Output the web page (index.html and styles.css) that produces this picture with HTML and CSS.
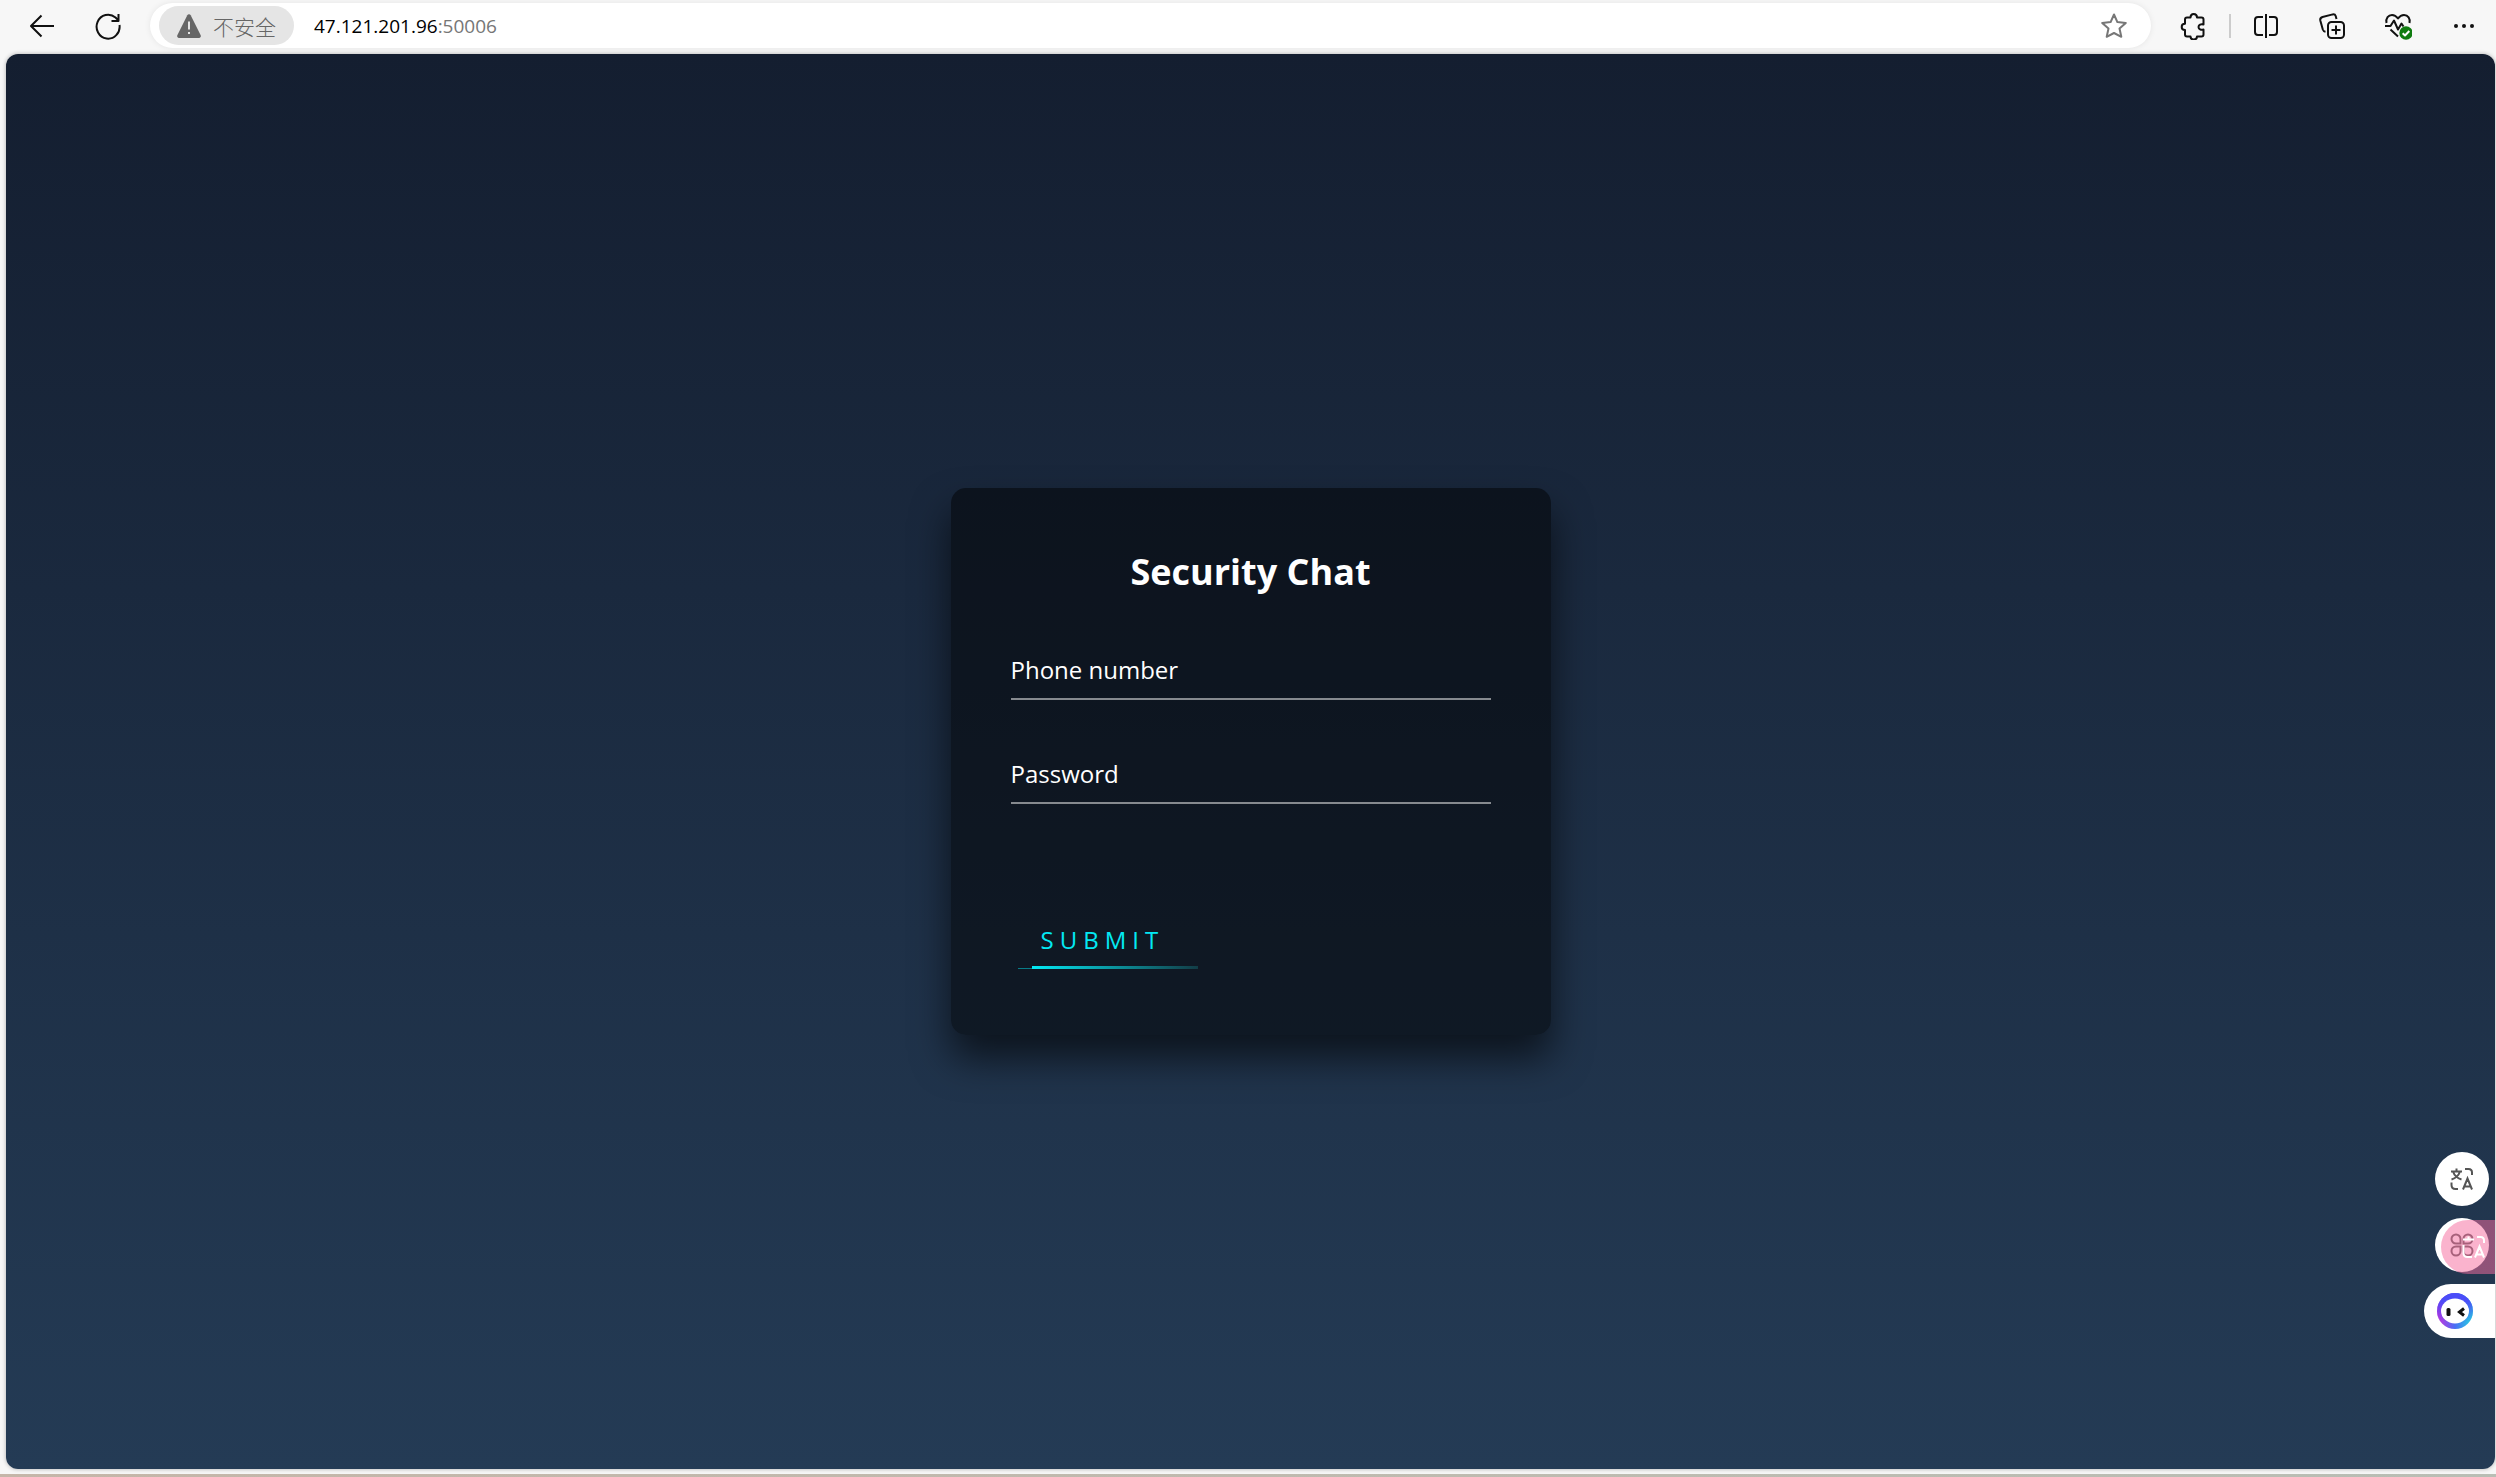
FILE: index.html
```html
<!DOCTYPE html>
<html lang="en">
<head>
<meta charset="utf-8">
<title>Security Chat</title>
<link rel="stylesheet" href="styles.css">
</head>
<body>
<header class="toolbar">
  <button class="tool" type="button" aria-label="Back">
    <svg class="icon" viewBox="0 0 28 28"><path d="M26 14H3M13.500 3.500L3 14l10.500 10.500"/></svg>
  </button>
  <button class="tool" type="button" aria-label="Refresh">
    <svg class="icon" viewBox="0 0 28 28"><path d="M25.500 13a11.500 12 0 1 1-4-7.500L24.500 8.500M24.500 2v7h-7"/></svg>
  </button>
  <div class="address">
    <button class="chip" type="button">
      <svg class="warn" viewBox="0 0 24 24"><path d="M10.300 1.200a2 2 0 0 1 3.400 0l10 20a2 2 0 0 1-1.700 2.800H2a2 2 0 0 1-1.700-2.800z" fill="#666"/><path d="M12 7.500v8M12 18v2" stroke="#e5e5e5" stroke-width="2"/></svg>
      <span>不安全</span>
    </button>
    <div class="url">47.121.201.96<span class="port">:50006</span></div>
    <button class="tool star" type="button" aria-label="Favorite">
      <svg class="icon" viewBox="0 0 28 28"><path d="M14 2.500l3.400 7.600 8.400.9-6.300 5.500 1.800 8.300L14 21l-7.300 3.800 1.800-8.300L2.200 11l8.400-.9z"/></svg>
    </button>
  </div>
  <nav class="tools">
    <button class="tool" type="button" aria-label="Extensions">
      <svg class="icon" viewBox="0 0 28 28"><path d="M7 5.500h3.500C10.500 3 12 2 13.700 2S17 3 17 5.500h4.500q2 0 2 2v5c-2.500-1-5 .3-5 2.500s2.500 3.300 5 2.500v5q0 2-2 2H17c0 2-1.500 3-3.300 3s-3.200-1-3.200-3H7q-2 0-2-2v-4.500c-2.300 0-3.300-1.300-3.300-3s1-3.200 3.300-3.200V7.500q0-2 2-2z"/></svg>
    </button>
    <span class="rule"></span>
    <button class="tool" type="button" aria-label="Split screen">
      <svg class="icon" viewBox="0 0 28 28"><path d="M11 5H6Q3 5 3 8v12q0 3 3 3h5M17 5h5q3 0 3 3v12q0 3-3 3h-5M14 2v24"/></svg>
    </button>
    <button class="tool" type="button" aria-label="Collections">
      <svg class="icon" viewBox="0 0 28 28"><rect x="10" y="10" width="16" height="16" rx="3.500"/><path d="M18 13.500v9M13.500 18h9M18.500 7l-.8-3q-.7-2-3-1.600L4.500 5Q1.700 6 2.300 8.500l2.500 9q.7 2 2.700 2.300"/></svg>
    </button>
    <button class="tool" type="button" aria-label="Browser essentials">
      <svg class="icon" viewBox="0 0 28 28"><path d="M2.500 11C1.500 6 4.500 3 8 3c3 0 4.500 1.500 6 3.500C15.500 4.500 17 3 20 3c4 0 6.500 3.500 5.500 8M1 14h5.500L10 8.500l4 9 3.500-6 2 3M6.500 17.500l7.500 7"/><circle cx="22" cy="21" r="6.700" fill="#107c10" stroke="none"/><path d="M18.700 21.200l2.300 2.300 4.300-4.500" stroke="#fff"/></svg>
    </button>
    <button class="tool" type="button" aria-label="More">
      <svg class="icon dots" viewBox="0 0 28 28"><circle cx="6" cy="14" r="2"/><circle cx="14" cy="14" r="2"/><circle cx="22" cy="14" r="2"/></svg>
    </button>
  </nav>
</header>
<main class="page">
  <form class="login">
    <h1 class="title">Security Chat</h1>
    <div class="field">
      <input id="phone" type="text">
      <label for="phone">Phone number</label>
    </div>
    <div class="field">
      <input id="password" type="password">
      <label for="password">Password</label>
    </div>
    <button class="submit" type="button">SUBMIT</button>
  </form>
</main>
<footer class="edge"></footer>
<aside class="dock">
  <button class="bubble" type="button" aria-label="Translate">
    <svg class="glyph" viewBox="0 0 24 24"><path d="M1 4.500h11M6.500 1.500v3M3 4.500q2 6 8.500 8M10 4.500q-2 6-8.500 8M15 2h3.500q3.500 0 3.500 3.500V8M1.500 15.500v2.500q0 4 4 4H8M13 22.500l4.500-11 4.500 11M14.500 19.500h6"/></svg>
  </button>
  <div class="stack">
    <button class="bubble" type="button" aria-label="Apps">
      <svg class="glyph" viewBox="0 0 24 24"><path d="M10.500 10.500H6A4.500 4.500 0 1 1 10.500 6zM13.500 10.500V6A4.500 4.500 0 1 1 18 10.500zM10.500 13.500V18A4.500 4.500 0 1 1 6 13.500zM13.500 13.500H18A4.500 4.500 0 1 1 13.500 18z"/></svg>
    </button>
    <button class="pink" type="button" aria-label="Translate page">
      <svg class="glyph" viewBox="0 0 24 24"><path d="M1 4.500h11M6.500 1.500v3M15 2h3.500q3.500 0 3.500 3.500V8M1.500 10v8q0 4 4 4H10M13 22.500l4.500-11 4.500 11M14.500 19.500h6"/></svg>
    </button>
  </div>
  <button class="assistant" type="button" aria-label="Assistant">
    <svg class="face" viewBox="0 0 36 36">
      <defs><linearGradient id="ring" x1="0" y1="1" x2="1" y2="1"><stop offset="0" stop-color="#c832dc"/><stop offset=".5" stop-color="#4a6ef5"/><stop offset="1" stop-color="#22d8df"/></linearGradient><linearGradient id="top" x1="0" y1="0" x2="0" y2="1"><stop offset=".2" stop-color="#4b4df8"/><stop offset=".8" stop-color="#4b3df5" stop-opacity="0"/></linearGradient></defs>
      <circle cx="18" cy="18" r="18" fill="url(#ring)"/><circle cx="18" cy="18" r="18" fill="url(#top)"/><ellipse cx="18" cy="18" rx="14" ry="12.500" fill="#fff"/>
      <rect x="9.500" y="15" width="4" height="8" rx="1.500" fill="#111"/><path d="M27 15.500L22.500 19l4.500 3.500" fill="none" stroke="#111" stroke-width="3"/>
    </svg>
  </button>
</aside>
</body>
</html>
```
FILE: styles.css
```css
* { box-sizing: border-box; }

body {
  margin: 0;
  min-height: 100vh;
  display: flex;
  flex-direction: column;
  background: #f7f7f7;
  font-family: "Open Sans", "Noto Sans CJK SC", sans-serif;
}

button {
  border: 0;
  padding: 0;
  background: none;
  font: inherit;
  color: inherit;
}

.toolbar {
  height: 54px;
  padding: 3px 16px 6px 26px;
  display: flex;
  align-items: center;
}

.tool {
  width: 32px;
  height: 32px;
  margin-right: 34px;
  display: grid;
  place-items: center;
}

.icon {
  width: 28px;
  height: 28px;
  fill: none;
  stroke: #111;
  stroke-width: 2;
  stroke-linejoin: round;
}

.dots { fill: #111; stroke: none; }

.address {
  flex: 1;
  height: 45px;
  margin: 0 27px 0 -8px;
  padding: 3px 21px 3px 9px;
  display: flex;
  align-items: center;
  background: #fff;
  border-radius: 23px;
  box-shadow: 0 0 6px rgba(0, 0, 0, 0.08);
}

.chip {
  height: 39px;
  padding: 0 18px;
  display: flex;
  align-items: center;
  gap: 12px;
  border-radius: 20px;
  background: #e5e5e5;
  color: #666;
  font-size: 21px;
  font-weight: 300;
}

.warn { width: 24px; height: 24px; fill: none; }

.url {
  flex: 1;
  margin-left: 20px;
  font-size: 19px;
  color: #000;
}

.port { color: #767676; }

.star { margin: 0; }
.star .icon { stroke: #777; }

.tools { display: flex; align-items: center; }
.tools .tool:last-child { margin-right: 0; }

.rule {
  width: 2px;
  height: 24px;
  margin: 0 19px 0 -15px;
  background: #ccc;
}

.page {
  flex: 1;
  margin: 0 1px 0 6px;
  display: grid;
  place-items: center;
  border-radius: 12px;
  background: linear-gradient(#141e30, #243b55);
  box-shadow: 0 0 4px rgba(0, 0, 0, 0.3);
}

.login {
  width: 600px;
  padding: 60px 60px 66px;
  border-radius: 15px;
  background: rgba(0, 0, 0, 0.5);
  box-shadow: 0 23px 38px rgba(0, 0, 0, 0.6);
  color: #fff;
}

.title {
  margin: 0 0 45px;
  font-size: 36px;
  line-height: 48px;
  text-align: center;
}

.field {
  margin-bottom: 45px;
  display: grid;
  font-size: 24px;
  line-height: 28px;
}

.field input,
.field label { grid-area: 1 / 1; padding: 15px 0; }

.field input {
  width: 100%;
  height: 59px;
  border: 0;
  border-bottom: 2px solid #868a8f;
  background: none;
  color: #fff;
  font: inherit;
}

.submit {
  position: relative;
  width: 187px;
  margin-top: 107px;
  padding: 15px 0 15px 30px;
  display: block;
  font-size: 24px;
  line-height: 28px;
  letter-spacing: 6px;
  text-align: left;
  color: #03e9f4;
}

.submit::before,
.submit::after {
  content: "";
  position: absolute;
  bottom: 0;
}

.submit::before {
  left: 21px;
  right: 0;
  height: 3px;
  background: linear-gradient(90deg, #03e9f4, #123c46);
}

.submit::after {
  left: 7px;
  width: 14px;
  height: 1px;
  background: #087c88;
}

.edge {
  height: 3px;
  margin-top: 5px;
  background: linear-gradient(90deg, #c5b6a9, #b9beb5);
}

.dock {
  position: fixed;
  right: 1px;
  bottom: 139px;
  display: flex;
  flex-direction: column;
  align-items: flex-end;
  gap: 12px;
}

.bubble {
  width: 54px;
  height: 54px;
  margin-right: 6px;
  display: grid;
  place-items: center;
  border-radius: 50%;
  background: #fff;
}

.glyph {
  width: 24px;
  height: 24px;
  fill: none;
  stroke: #555;
  stroke-width: 2;
}

.stack { display: grid; }
.stack > * { grid-area: 1 / 1; }

.pink {
  width: 54px;
  height: 54px;
  margin: 2px 0 -2px;
  padding-left: 21px;
  justify-self: end;
  display: flex;
  align-items: center;
  border-radius: 27px 0 0 27px;
  background: rgba(246, 110, 160, 0.52);
}

.pink .glyph { stroke: #fff; }

.assistant {
  width: 71px;
  height: 54px;
  padding-left: 13px;
  border-radius: 27px 0 0 27px;
  background: #fff;
}

.face { width: 36px; height: 36px; display: block; }
```
